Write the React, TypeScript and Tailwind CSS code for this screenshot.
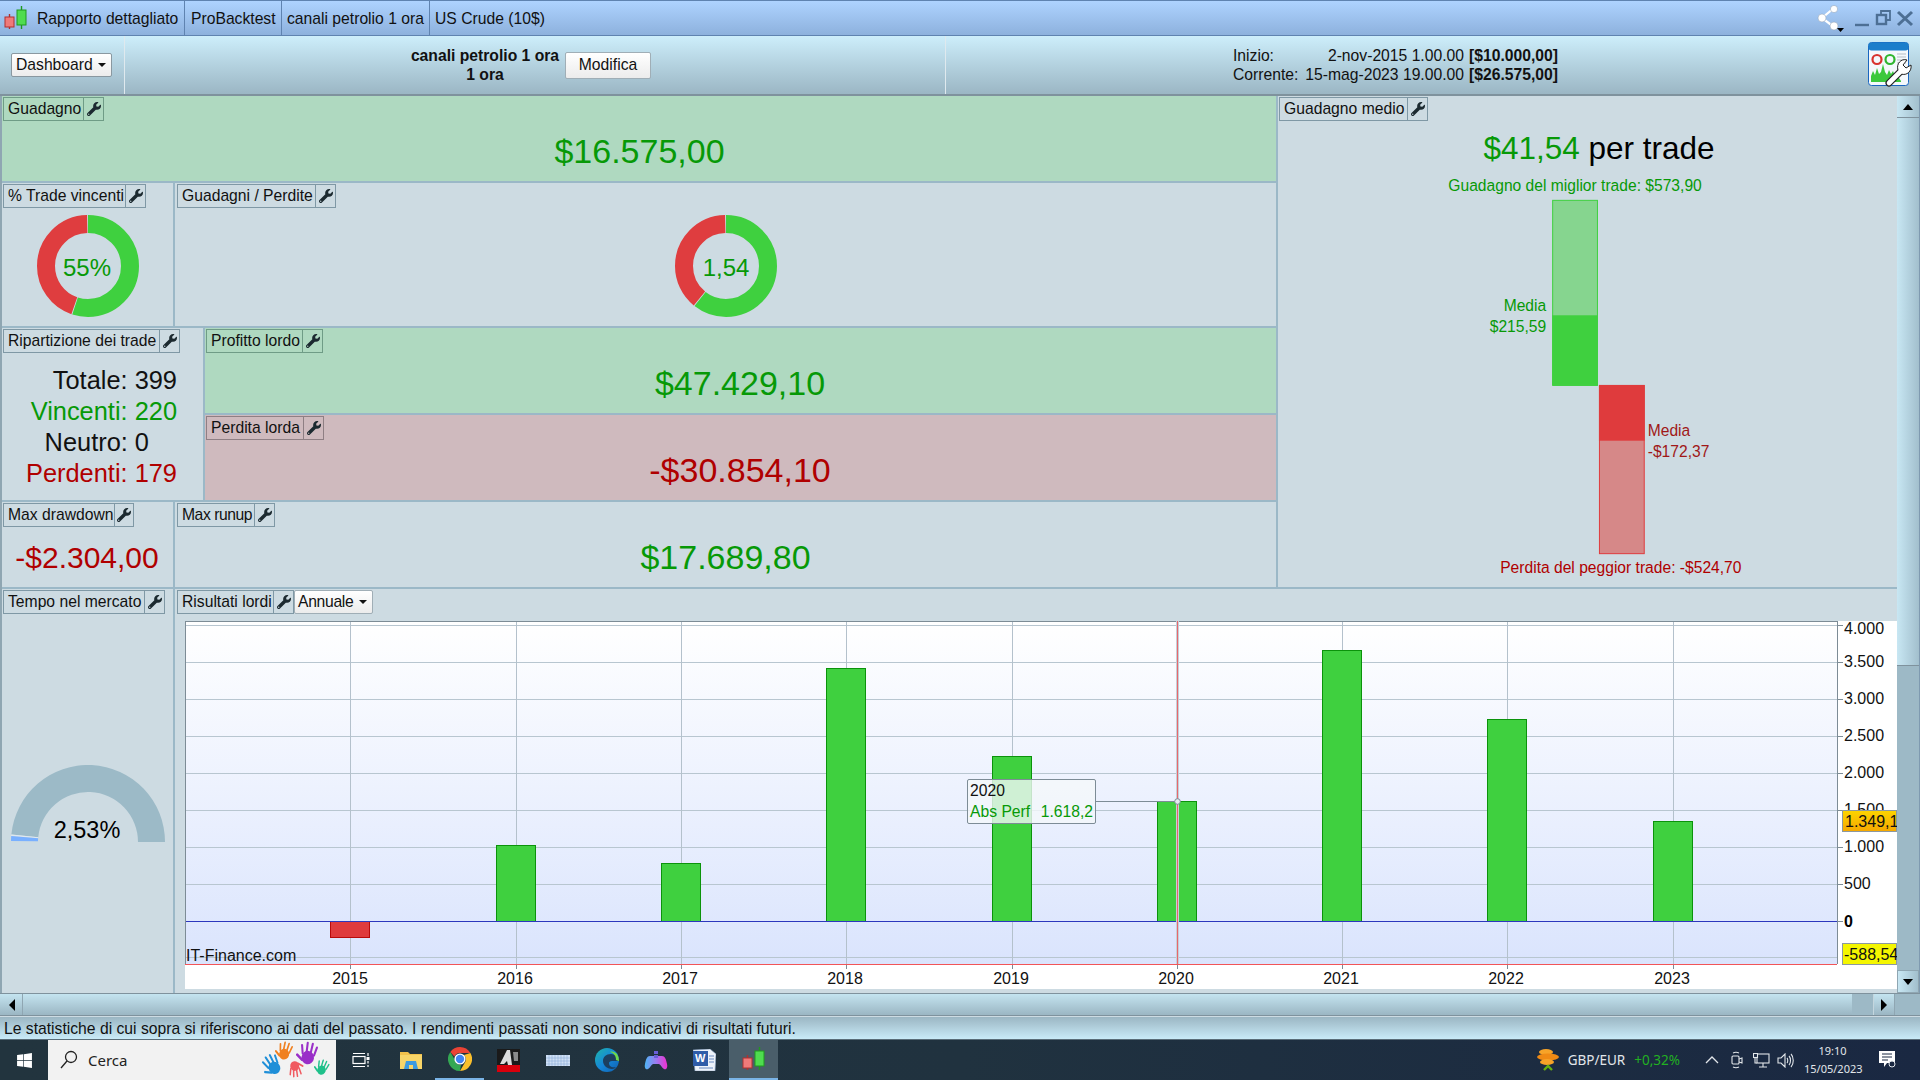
import React from 'react';
import { FaWrench, FaWindows } from 'react-icons/fa';

const years = [
  { year: 2015, x: 350, lx: 350, top: 921, bottom: 937, red: true },
  { year: 2016, x: 516, lx: 515, top: 845, bottom: 921 },
  { year: 2017, x: 681, lx: 680, top: 863, bottom: 921 },
  { year: 2018, x: 846, lx: 845, top: 668, bottom: 921 },
  { year: 2019, x: 1012, lx: 1011, top: 756, bottom: 921 },
  { year: 2020, x: 1177, lx: 1176, top: 801, bottom: 921 },
  { year: 2021, x: 1342, lx: 1341, top: 650, bottom: 921 },
  { year: 2022, x: 1507, lx: 1506, top: 719, bottom: 921 },
  { year: 2023, x: 1673, lx: 1672, top: 821, bottom: 921 },
];

const axis = [
  { label: '4.000', y: 625.5, text: 634 },
  { label: '3.500', y: 662.5, text: 667 },
  { label: '3.000', y: 699.5, text: 704 },
  { label: '2.500', y: 736.5, text: 741 },
  { label: '2.000', y: 773.5, text: 778 },
  { label: '1.500', y: 810.5, text: 815 },
  { label: '1.000', y: 847.5, text: 852 },
  { label: '500', y: 884.5, text: 889 },
];

const Tag = ({ label, w, tone = 'border-[#7f98a5]', tight = '' }: { label: string; w: string; tone?: string; tight?: string }) => (
  <div className={`flex h-[24px] self-start border ${tone} ${w}`}>
    <span className={`flex-1 whitespace-nowrap pl-[4px] text-[15.7px] leading-[22px] text-[#111] ${tight}`}>{label}</span>
    <span className={`flex w-[20px] items-center justify-center border-l ${tone}`}>
      <FaWrench className="h-[14px] w-[14px] text-[#1c2a30]" />
    </span>
  </div>
);

const Donut = ({ pct, label, textX = 50 }: { pct: number; label: string; textX?: number }) => (
  <svg width="102" height="102" viewBox="0 0 102 102">
    <g transform="rotate(-90 51 51)">
      <circle cx="51" cy="51" r="42" fill="none" stroke="#df3d3f" strokeWidth="18" pathLength={100} strokeDasharray={`${99.4 - pct} ${pct + 0.6}`} strokeDashoffset={-pct - 0.3} />
      <circle cx="51" cy="51" r="42" fill="none" stroke="#3fd03f" strokeWidth="18" pathLength={100} strokeDasharray={`${pct} ${100 - pct}`} />
    </g>
    <text x={textX} y="61" textAnchor="middle" fontSize="24" fill="#079907">{label}</text>
  </svg>
);

// arc band on the semicircle, angles in degrees from the left end
const band = (from: number, to: number, r1: number, r2: number) => {
  const p = (r: number, a: number) => {
    const t = (a * Math.PI) / 180;
    return `${(77 - r * Math.cos(t)).toFixed(2)} ${(77 - r * Math.sin(t)).toFixed(2)}`;
  };
  return `M${p(r1, from)} A${r1} ${r1} 0 0 1 ${p(r1, to)} L${p(r2, to)} A${r2} ${r2} 0 0 0 ${p(r2, from)} Z`;
};

const Gauge = () => (
  <svg width="154" height="78" viewBox="0 0 154 78">
    <path d={band(5.5, 180, 77, 50)} fill="#9cbac7" />
    <path d={band(4.4, 5.5, 77, 50)} fill="#dfe8ee" />
    <path d={band(0.8, 4.4, 77, 50)} fill="#79b0ff" />
    <text x="76" y="73" textAnchor="middle" fontSize="23.5" fill="#000">2,53%</text>
  </svg>
);

const Arrow = ({ dir }: { dir: 'up' | 'down' | 'left' | 'right' }) => {
  const pts = { up: '1,7 11,7 6,1', down: '1,1 11,1 6,7', left: '7,1 7,13 1,7', right: '1,1 1,13 7,7' }[dir];
  const isV = dir === 'up' || dir === 'down';
  return (
    <svg width={isV ? 12 : 8} height={isV ? 8 : 14} viewBox={isV ? '0 0 12 8' : '0 0 8 14'}>
      <polygon points={pts} fill="#000" />
    </svg>
  );
};

const Candles = ({ className }: { className?: string }) => (
  <svg className={className} viewBox="0 0 24 26">
    <line x1="5.5" y1="9" x2="5.5" y2="24" stroke="#b03030" strokeWidth="1.4" />
    <rect x="1" y="12" width="9" height="10" fill="#f07a7a" stroke="#b03030" />
    <line x1="17.5" y1="1" x2="17.5" y2="24" stroke="#1f9a1f" strokeWidth="1.4" />
    <rect x="13" y="5" width="9" height="15" fill="#4fdc4f" stroke="#1f9a1f" />
  </svg>
);

const Hand = ({ color, size, rotate, className }: { color: string; size: number; rotate: number; className?: string }) => (
  <svg className={className} width={size} height={size} viewBox="0 0 24 24">
    <g transform={`rotate(${rotate} 12 12)`} stroke={color} strokeLinecap="round" fill={color}>
      <ellipse cx="12" cy="16" rx="6" ry="6.5" stroke="none" />
      <line x1="6.5" y1="13" x2="4.5" y2="5" strokeWidth="2" />
      <line x1="10" y1="11" x2="9.5" y2="2" strokeWidth="2" />
      <line x1="14" y1="11" x2="14.5" y2="2" strokeWidth="2" />
      <line x1="17.5" y1="13" x2="19" y2="5" strokeWidth="2" />
      <line x1="7" y1="19" x2="1.5" y2="15" strokeWidth="2.4" />
    </g>
  </svg>
);

const Chart = () => (
  <div className="relative h-[368px] w-[1712px]">
    <svg width="1712" height="368" viewBox="185 621 1712 368" className="block" fontFamily="Liberation Sans, Arial, sans-serif">
      <defs>
        <linearGradient id="plot" x1="0" y1="0" x2="0" y2="1">
          <stop offset="0" stopColor="#ffffff" />
          <stop offset="1" stopColor="#dae4fd" />
        </linearGradient>
        <linearGradient id="orange" x1="0" y1="0" x2="0" y2="1">
          <stop offset="0" stopColor="#fdd400" />
          <stop offset="1" stopColor="#f6a800" />
        </linearGradient>
      </defs>
      <rect x="185" y="621" width="1712" height="368" fill="#fff" />
      <rect x="185" y="622" width="1652" height="342" fill="url(#plot)" />
      {[...axis.map((a) => a.y), 957.5].map((y) => (
        <line key={y} x1="185" x2="1837" y1={y} y2={y} stroke="#b8c6d0" />
      ))}
      {years.map((b) => (
        <line key={b.year} x1={b.x + 0.5} x2={b.x + 0.5} y1="621" y2="964" stroke="#b4c1cc" />
      ))}
      {years.map((b) => (
        <line key={b.year} x1={b.x + 0.5} x2={b.x + 0.5} y1="964" y2="969" stroke="#7d8c96" />
      ))}
      {years.map((b) => (
        <rect
          key={b.year}
          x={b.x - 19.5}
          y={b.top + 0.5}
          width="39"
          height={b.bottom - b.top}
          fill={b.red ? '#df3b3d' : '#3fd03f'}
          stroke={b.red ? '#b80b0b' : '#0b930b'}
        />
      ))}
      <line x1="185" x2="1837" y1="921.5" y2="921.5" stroke="#2c37bd" />
      <line x1="185" x2="1837" y1="964.5" y2="964.5" stroke="#f25558" />
      <line x1="185" x2="1837" y1="621.5" y2="621.5" stroke="#7d8c96" />
      <line x1="185.5" x2="185.5" y1="621" y2="964" stroke="#7d8c96" />
      <line x1="1837.5" x2="1837.5" y1="621" y2="964" stroke="#7d8c96" />
      <line x1="1177.5" x2="1177.5" y1="621" y2="964" stroke="#c6cfd9" strokeWidth="3" />
      <line x1="1177.5" x2="1177.5" y1="621" y2="964" stroke="#e8686c" />
      <line x1="1096" x2="1177" y1="801.5" y2="801.5" stroke="#7d8c96" />
      <circle cx="1177.5" cy="801.5" r="2.8" fill="#e6ecf2" stroke="#7d8c96" />
      {[...axis.map((a) => a.y), 921.5].map((y) => (
        <line key={y} x1="1838" x2="1843" y1={y} y2={y} stroke="#7d8c96" />
      ))}
      {axis.map((a) => (
        <text key={a.label} x="1844" y={a.text} fontSize="16" fill="#111">{a.label}</text>
      ))}
      <text x="1844" y="927" fontSize="16" fontWeight="bold" fill="#000">0</text>
      {years.map((b) => (
        <text key={b.year} x={b.lx} y="984" fontSize="16" fill="#111" textAnchor="middle">{b.year}</text>
      ))}
      <text x="186" y="961" fontSize="16" fill="#111">IT-Finance.com</text>
      <rect x="1842.5" y="810.5" width="54" height="21" fill="url(#orange)" stroke="#8c98a0" />
      <text x="1845" y="827" fontSize="16" fill="#111">1.349,1</text>
      <rect x="1842.5" y="943.5" width="54" height="21" fill="#f4f600" stroke="#8c98a0" />
      <text x="1844" y="960" fontSize="16" fill="#111">-588,54</text>
    </svg>
    <div className="absolute left-[782px] top-[158px] h-[45px] w-[129px] rounded-[2px] border border-[#7d8c96] bg-[#f4f8fa]/80 pl-[2px] text-[15.7px] leading-[21px]">
      <div className="text-[#111]">2020</div>
      <div className="flex justify-between pr-[2px] text-[#079907]">
        <span>Abs Perf</span>
        <span>1.618,2</span>
      </div>
    </div>
  </div>
);

const AppIcon = () => (
  <svg width="44" height="45" viewBox="0 0 44 45">
    <rect x="0.5" y="0.5" width="40" height="43" rx="3" fill="#f4f8fc" stroke="#1a66c0" />
    <rect x="0.5" y="0.5" width="40" height="8" rx="3" fill="#1b7ecb" />
    <circle cx="9" cy="17.5" r="4.5" fill="none" stroke="#d8332f" strokeWidth="2.2" />
    <circle cx="22" cy="17.5" r="4.5" fill="none" stroke="#2fb52f" strokeWidth="2.2" />
    <path d="M29 12h9M29 15h9M29 18h9M29 21h9" stroke="#b5bdc5" />
    <path d="M3 40V34l2-5 2 4 2-7 2 6 2-2 2-8 2 8 2 3 2-5 2 4 2-3 2 5 2-1 4 6v1z" fill="#3cc83c" />
    <path d="M21 41L33 29" stroke="#222" strokeWidth="7" strokeLinecap="round" />
    <path d="M30 28c-2-6 3-12 9-10l-4 5 3 3 5-3c1 6-4 11-10 9z" fill="#fff" stroke="#222" />
    <path d="M21 41L33 29" stroke="#fff" strokeWidth="4.6" strokeLinecap="round" />
  </svg>
);

const taskIcons = [
  <svg key="tv" width="18" height="16" viewBox="0 0 18 16" fill="none" stroke="#fff" strokeWidth="1.2" className="-ml-[2px]">
    <rect x="1" y="4.5" width="12" height="7" />
    <path d="M1 1.5h12M1 14.5h12M16 1v3M16 9v2.5M16 13v2" />
    <rect x="14.5" y="5" width="3" height="3" fill="#fff" stroke="none" />
  </svg>,
  <svg key="fo" width="22" height="18" viewBox="0 0 22 18">
    <path d="M0 1h8l2 2h12v15H0z" fill="#f2c14b" />
    <rect x="0" y="4" width="22" height="14" fill="#f8d568" />
    <path d="M6 10h10l2 8H4z" fill="#3d9be0" />
    <rect x="9" y="14" width="4" height="4" fill="#f8d568" />
  </svg>,
  <svg key="ch" width="24" height="24" viewBox="0 0 24 24">
    <path d="M12 0a12 12 0 0 1 10.4 6H12a6 6 0 0 0-5.6 3.6L2.3 5A12 12 0 0 1 12 0z" fill="#ea4335" />
    <path d="M22.4 6A12 12 0 0 1 12 24l5.2-9A6 6 0 0 0 16 8z" fill="#fbc02d" />
    <path d="M12 24A12 12 0 0 1 2.3 5l4.6 8A6 6 0 0 0 13 18z" fill="#34a853" />
    <circle cx="12" cy="12" r="5.6" fill="#fff" />
    <circle cx="12" cy="12" r="4.2" fill="#4285f4" />
  </svg>,
  <svg key="ad" width="23" height="23" viewBox="0 0 23 23">
    <rect width="23" height="23" fill="#1a1a1a" />
    <rect y="16" width="23" height="7" fill="#d8000c" />
    <path d="M3 15L10 1h3l2 15h-4l-1-4-3 3z" fill="#dcdcdc" />
    <path d="M16 3h5v9h-4z" fill="#8a8a8a" />
  </svg>,
  <svg key="kb" width="24" height="11" viewBox="0 0 24 11">
    <rect width="24" height="11" fill="#cfe0f5" />
    <path d="M3 0v11M6 0v11M9 0v11M12 0v11M15 0v11M18 0v11M21 0v11M0 3h24M0 6h24M0 9h24" stroke="#8fb0d8" strokeWidth="0.6" />
  </svg>,
  <svg key="ed" width="24" height="24" viewBox="0 0 24 24">
    <defs>
      <linearGradient id="edge" x1="0" y1="0" x2="1" y2="1">
        <stop offset="0" stopColor="#1fb5a8" />
        <stop offset="0.5" stopColor="#1587d8" />
        <stop offset="1" stopColor="#0f5fb0" />
      </linearGradient>
    </defs>
    <circle cx="12" cy="12" r="12" fill="url(#edge)" />
    <path d="M24 13c0-4-4-7-8-7-5 0-8 3-8 7 0 5 5 8 9 8 2 0 3-1 4-2-3 1-7 0-7-4 0-1 1-2 3-2h7z" fill="#1c3f5f" />
    <path d="M24 13a12 12 0 0 0-2-7c-2-2-5-3-7-2 4 1 6 4 6 8z" fill="#6fd84a" />
  </svg>,
  <svg key="gp" width="24" height="19" viewBox="0 0 24 19">
    <defs>
      <linearGradient id="pad" x1="0" y1="0" x2="1" y2="0">
        <stop offset="0" stopColor="#4db5f5" />
        <stop offset="0.5" stopColor="#9a7cf0" />
        <stop offset="1" stopColor="#f02fd0" />
      </linearGradient>
    </defs>
    <path d="M6 5h12c3 0 4 3 5 8 1 4-1 6-3 5-2-1-3-4-5-5H9c-2 1-3 4-5 5-2 1-4-1-3-5 1-5 2-8 5-8z" fill="url(#pad)" />
    <path d="M10 0h4v3h-4zM10 4h4v3h-4z" fill="#6a5fd8" />
  </svg>,
  <svg key="wd" width="23" height="22" viewBox="0 0 23 22">
    <path d="M0 1l17-1 6 5-1 17H2z" fill="#eef3fa" stroke="#8fa8c8" strokeWidth="0.6" />
    <rect x="0" y="2" width="15" height="15" fill="#2f5ca8" />
    <text x="2" y="13" fontSize="11" fontWeight="bold" fill="#fff" fontFamily="Liberation Sans, sans-serif">W</text>
    <path d="M16 7h5M16 10h5M16 13h5M6 19h14" stroke="#6a8ac0" />
  </svg>,
];

export default function App() {
  return (
    <div className="flex h-[1080px] w-[1920px] flex-col overflow-hidden bg-[#cddbe2] font-['Liberation_Sans',Arial,sans-serif] text-[15.7px] text-[#111]">
      {/* Title bar */}
      <div className="flex h-[36px] items-stretch border-y border-[#5f83b0] bg-linear-to-b from-[#aed3ff] to-[#8db1dd] leading-[35px]">
        <div className="flex w-[185px] border-r border-[#5f83b0] pl-[4px]">
          <Candles className="mt-[4px] h-[26px] w-[24px]" />
          <span className="ml-[9px]">Rapporto dettagliato</span>
        </div>
        <div className="w-[97px] border-r border-[#5f83b0] pl-[6px]">ProBacktest</div>
        <div className="w-[148px] border-r border-[#5f83b0] pl-[5px]">canali petrolio 1 ora</div>
        <div className="pl-[5px]">US Crude (10$)</div>
        <div className="ml-auto flex items-start">
          <svg width="30" height="30" viewBox="0 0 30 30" className="mr-[8px] mt-[2px]">
            <path d="M18 5L6 15l12 9" fill="none" stroke="#fff" strokeWidth="2.2" />
            <circle cx="18" cy="6" r="3.6" fill="#fff" stroke="#8a9cb0" strokeWidth="0.5" />
            <circle cx="6" cy="15" r="4" fill="#fff" stroke="#8a9cb0" strokeWidth="0.5" />
            <circle cx="18" cy="23" r="4" fill="#fff" stroke="#8a9cb0" strokeWidth="0.5" />
            <polygon points="21,25 28,25 24.5,29" fill="#000" />
          </svg>
          <svg width="64" height="20" viewBox="0 0 64 20" className="mr-[2px] mt-[8px]" fill="none" stroke="#4d6f94" strokeWidth="2.4">
            <path d="M1 16h14" />
            <rect x="23" y="6" width="9" height="9" />
            <path d="M27 5V2h9v9h-3" strokeWidth="1.8" />
            <path d="M44 3l14 13M58 3L44 16" strokeWidth="3" />
          </svg>
        </div>
      </div>

      {/* Toolbar */}
      <div className="flex h-[60px] border-b-2 border-[#7f929d] bg-linear-to-b from-[#cdeefb] to-[#9bb6c4]">
        <div className="flex w-[125px] items-center border-r border-[#dfe9ee] pl-[11px]">
          <button className="flex h-[24px] w-[101px] items-center rounded-[2px] border border-[#8a98a0] bg-linear-to-b from-white to-[#ececec] pl-[4px] text-[15.7px]">
            Dashboard
            <svg width="8" height="4" viewBox="0 0 8 4" className="ml-[5px]"><polygon points="0,0 8,0 4,4" fill="#111" /></svg>
          </button>
        </div>
        <div className="flex w-[821px] items-center border-r border-[#dfe9ee] pl-[285px]">
          <div className="w-[150px] text-center font-bold leading-[19px]">
            canali petrolio 1 ora
            <br />1 ora
          </div>
          <button className="ml-[5px] h-[27px] w-[86px] rounded-[2px] border border-[#a0aeb6] bg-linear-to-b from-white to-[#ececec] text-[15.7px]">Modifica</button>
        </div>
        <div className="flex flex-1 items-center pl-[287px]">
          <div className="grid grid-cols-[70px_161px_auto] leading-[19px]">
            <span>Inizio:</span>
            <span className="text-right">2-nov-2015 1.00.00</span>
            <span className="ml-[5px] font-bold">[$10.000,00]</span>
            <span>Corrente:</span>
            <span className="whitespace-nowrap text-right">15-mag-2023 19.00.00</span>
            <span className="ml-[5px] font-bold">[$26.575,00]</span>
          </div>
          <div className="ml-auto mr-[8px] -mt-[2px]"><AppIcon /></div>
        </div>
      </div>

      {/* Panels + vertical scrollbar */}
      <div className="flex h-[897px]">
        <div className="flex w-[1897px] flex-col border-l-2 border-[#8fa6b2]">
          <div className="flex h-[493px] border-b-2 border-[#9bb8c7]">
            <div className="flex w-[1274px] flex-col">
              <div className="flex h-[87px] flex-col border-b-2 border-[#9bb8c7] bg-[#afd9c0] pl-[1px] pt-[1px]">
                <Tag label="Guadagno" w="w-[101px]" tone="border-[#6f9c86]" />
                <div className="flex flex-1 items-center justify-center text-[34px] text-[#079907]">$16.575,00</div>
              </div>
              <div className="flex h-[145px] border-b-2 border-[#9bb8c7]">
                <div className="flex w-[173px] flex-col border-r-2 border-[#9bb8c7] pl-[1px] pt-[1px]">
                  <Tag label="% Trade vincenti" w="w-[143px]" />
                  <div className="flex flex-1 items-center justify-center pb-[2px]"><Donut pct={55} label="55%" /></div>
                </div>
                <div className="flex flex-1 flex-col pl-[2px] pt-[1px]">
                  <Tag label="Guadagni / Perdite" w="w-[159px]" />
                  <div className="flex flex-1 items-center justify-center pb-[2px] pr-[2px]"><Donut pct={60.6} label="1,54" textX={51} /></div>
                </div>
              </div>
              <div className="flex h-[174px] border-b-2 border-[#9bb8c7]">
                <div className="flex w-[203px] flex-col border-r-2 border-[#9bb8c7] pl-[1px] pt-[1px]">
                  <Tag label="Ripartizione dei trade" w="w-[177px]" />
                  <div className="flex flex-1 flex-col justify-center pr-[26px] text-right text-[25.4px] leading-[31px]">
                    <div className="text-[#111]">Totale: 399</div>
                    <div className="text-[#079907]">Vincenti: 220</div>
                    <div className="pr-[28px] text-[#111]">Neutro: 0</div>
                    <div className="text-[#b00000]">Perdenti: 179</div>
                  </div>
                </div>
                <div className="flex flex-1 flex-col">
                  <div className="flex h-[87px] flex-col border-b-2 border-[#9bb8c7] bg-[#afd9c0] pl-[1px] pt-[1px]">
                    <Tag label="Profitto lordo" w="w-[117px]" tone="border-[#6f9c86]" />
                    <div className="flex flex-1 items-center justify-center pr-[2px] text-[34px] text-[#079907]">$47.429,10</div>
                  </div>
                  <div className="flex flex-1 flex-col bg-[#cfbabe] pl-[1px] pt-[1px]">
                    <Tag label="Perdita lorda" w="w-[118px]" tone="border-[#8f7f84]" />
                    <div className="flex flex-1 items-center justify-center pr-[2px] text-[34px] text-[#b00000]">-$30.854,10</div>
                  </div>
                </div>
              </div>
              <div className="flex flex-1">
                <div className="flex w-[173px] flex-col border-r-2 border-[#9bb8c7] pl-[1px] pt-[1px]">
                  <Tag label="Max drawdown" w="w-[131px]" />
                  <div className="flex flex-1 items-center justify-center pr-[2px] text-[30px] text-[#b00000]">-$2.304,00</div>
                </div>
                <div className="flex flex-1 flex-col pl-[2px] pt-[1px]">
                  <Tag label="Max runup" w="w-[98px]" tight="tracking-[-0.45px]" />
                  <div className="flex flex-1 items-center justify-center pr-[2px] text-[34px] text-[#079907]">$17.689,80</div>
                </div>
              </div>
            </div>
            <div className="flex flex-1 flex-col border-l-2 border-[#9bb8c7] pl-[1px] pt-[1px]">
              <Tag label="Guadagno medio" w="w-[149px]" />
              <div className="mt-[9px] pl-[22px] text-center text-[31.5px] leading-[37px] text-[#000]">
                <span className="text-[#079907]">$41,54</span> per trade
              </div>
              <svg width="618" height="422" viewBox="1279 167 618 422" fontFamily="Liberation Sans, Arial, sans-serif" fontSize="15.7">
                <text x="1575" y="191" textAnchor="middle" fill="#079907">Guadagno del miglior trade: $573,90</text>
                <rect x="1552.5" y="200.5" width="45" height="186" fill="#86d58f" stroke="#3fd03f" />
                <rect x="1552" y="316" width="46" height="70" fill="#3fd03f" />
                <text x="1546" y="312" textAnchor="end" fill="#079907">Media</text>
                <text x="1546" y="333" textAnchor="end" fill="#079907">$215,59</text>
                <rect x="1599.5" y="386.5" width="45" height="169" fill="#d68888" stroke="#df3b3d" />
                <rect x="1599" y="386" width="46" height="56" fill="#df3b3d" />
                <text x="1648" y="437" fill="#a01818">Media</text>
                <text x="1648" y="458" fill="#a01818">-$172,37</text>
                <text x="1621" y="575" textAnchor="middle" fill="#b00000">Perdita del peggior trade: -$524,70</text>
              </svg>
            </div>
          </div>
          <div className="flex flex-1">
            <div className="flex w-[173px] flex-col border-r-2 border-[#9bb8c7] pl-[1px] pt-[1px]">
              <Tag label="Tempo nel mercato" w="w-[162px]" />
              <div className="flex flex-1 items-center justify-center"><Gauge /></div>
            </div>
            <div className="flex flex-1 flex-col pl-[2px] pt-[1px]">
              <div className="flex self-start">
                <Tag label="Risultati lordi" w="w-[117px]" />
                <button className="flex h-[24px] w-[79px] items-center rounded-[2px] border border-[#a0aeb6] bg-linear-to-b from-white to-[#ececec] pl-[3px] text-[15.7px] tracking-[-0.3px]">
                  Annuale
                  <svg width="8" height="4" viewBox="0 0 8 4" className="ml-[6px]"><polygon points="0,0 8,0 4,4" fill="#111" /></svg>
                </button>
              </div>
              <div className="ml-[8px] mt-[7px]"><Chart /></div>
            </div>
          </div>
        </div>
        <div className="flex w-[23px] flex-col border-r border-[#7f9ab0] bg-[#9db9c6]">
          <div className="flex h-[22px] items-center justify-center border-b border-[#7f929d] bg-linear-to-r from-[#c8e7f3] to-[#a2bfcd]"><Arrow dir="up" /></div>
          <div className="h-[548px] border-b border-[#7f929d] bg-linear-to-r from-[#c8e7f3] to-[#a2bfcd]" />
          <div className="flex-1" />
          <div className="flex h-[23px] items-center justify-center border border-[#8fa6b2] bg-linear-to-r from-[#c8e7f3] to-[#a2bfcd]"><Arrow dir="down" /></div>
        </div>
      </div>

      {/* Horizontal scrollbar */}
      <div className="flex h-[23px] border-y border-[#7f929d] bg-[#9db9c6]">
        <div className="flex w-[1852px] bg-linear-to-b from-[#c4e4f0] to-[#9bb6c3]">
          <div className="ml-[2px] flex w-[21px] items-center justify-center border-r border-[#8fa6b2]"><Arrow dir="left" /></div>
        </div>
        <div className="w-[22px] border-r border-[#c4d6de]" />
        <div className="flex w-[21px] items-center justify-center border-r border-[#8fa6b2] bg-linear-to-b from-[#c4e4f0] to-[#9bb6c3]"><Arrow dir="right" /></div>
      </div>

      {/* Status bar */}
      <div className="mt-[1px] h-[23px] border-b border-[#5a6d78] bg-linear-to-b from-[#9bb6c3] to-[#c9ebf8] pl-[4px] leading-[23px]">
        Le statistiche di cui sopra si riferiscono ai dati del passato. I rendimenti passati non sono indicativi di risultati futuri.
      </div>

      {/* Taskbar */}
      <div className="flex h-[40px] items-stretch bg-linear-to-r from-[#22343e] via-[#20323f] to-[#1a2842] font-['Noto_Sans',sans-serif]">
        <div className="flex w-[48px] items-center justify-center"><FaWindows className="h-[17px] w-[17px] text-white" /></div>
        <div className="flex w-[288px] items-center bg-[#f2f2f2] pl-[12px] text-[15px] text-[#222]">
          <svg width="18" height="20" viewBox="0 0 18 20" fill="none" stroke="#222" strokeWidth="1.3">
            <circle cx="11" cy="7" r="5.5" />
            <path d="M7 11l-6 7" />
          </svg>
          <span className="ml-[10px]">Cerca</span>
          <div className="relative ml-auto mr-[3px] h-[38px] w-[72px]">
            <Hand color="#1f8fd8" size={23} rotate={-30} className="absolute left-0 top-[12px]" />
            <Hand color="#f08020" size={20} rotate={15} className="absolute left-[14px] top-0" />
            <Hand color="#f05a60" size={18} rotate={175} className="absolute left-[25px] top-[19px]" />
            <Hand color="#9a2fc8" size={25} rotate={10} className="absolute left-[35px] top-0" />
            <Hand color="#1fc08a" size={17} rotate={20} className="absolute left-[53px] top-[18px]" />
          </div>
        </div>
        <div className="flex">
          <div className="ml-[1px]" />
          {taskIcons.map((icon, i) => (
            <div key={i} className={`flex h-[40px] w-[49px] items-center justify-center ${i === 2 ? 'border-b-2 border-[#7ab4e6]' : ''}`}>{icon}</div>
          ))}
          <div className="flex h-[40px] w-[49px] items-center justify-center border-b-2 border-[#7ab4e6] bg-[#4a5e6a]">
            <Candles className="h-[26px] w-[24px]" />
          </div>
        </div>
        <div className="ml-auto flex items-center text-[#e2e6ea]">
          <svg width="22" height="24" viewBox="0 0 22 24">
            <ellipse cx="9" cy="4" rx="7" ry="3" fill="#f7a328" />
            <ellipse cx="11" cy="9" rx="11" ry="3.5" fill="#f08a14" />
            <ellipse cx="10" cy="14" rx="7" ry="3" fill="#f7a328" />
            <path d="M7 22l4-4 4 4" fill="none" stroke="#66b010" strokeWidth="2.4" />
          </svg>
          <span className="ml-[9px] text-[13.5px]">GBP/EUR</span>
          <span className="ml-[9px] text-[13.5px] text-[#22b022]">+0,32%</span>
          <svg width="14" height="8" viewBox="0 0 14 8" className="ml-[25px]" fill="none" stroke="#e2e6ea" strokeWidth="1.3"><path d="M1 7l6-6 6 6" /></svg>
          <svg width="12" height="18" viewBox="0 0 12 18" className="ml-[12px]" fill="none" stroke="#e2e6ea" strokeWidth="1.1">
            <rect x="1" y="5" width="7" height="8" rx="1" />
            <path d="M8 8l3-1v5l-3-1M2 2c2-1 4-1 6 0M2 16c2 1 4 1 6 0" />
          </svg>
          <svg width="17" height="15" viewBox="0 0 17 15" className="ml-[10px]" fill="none" stroke="#e2e6ea" strokeWidth="1.1">
            <rect x="4" y="1" width="12" height="9" />
            <rect x="0.5" y="0.5" width="4" height="4" fill="#1a2842" />
            <path d="M2 5v5h2M10 10v4M6 14h8" />
          </svg>
          <svg width="17" height="15" viewBox="0 0 17 15" className="ml-[7px]" fill="none" stroke="#e2e6ea" strokeWidth="1.1">
            <path d="M1 5h3l4-4v13l-4-4H1zM10 5c1 1 1 4 0 5M12 3c2 2 2 7 0 9M14 1c3 3 3 10 0 13" />
          </svg>
          <div className="ml-[10px] w-[57px] text-center text-[11px] leading-[18px]">
            <div>19:10</div>
            <div className="whitespace-nowrap">15/05/2023</div>
          </div>
          <svg width="17" height="18" viewBox="0 0 17 18" className="ml-[18px] mr-[24px]">
            <path d="M0 0h16v12H8l-3 4v-4H0z" fill="#fff" />
            <path d="M3 3h10M3 6h10M3 9h6" stroke="#1a2842" />
            <circle cx="13" cy="13" r="3" fill="#1a2842" stroke="#e2e6ea" />
          </svg>
        </div>
      </div>
    </div>
  );
}
